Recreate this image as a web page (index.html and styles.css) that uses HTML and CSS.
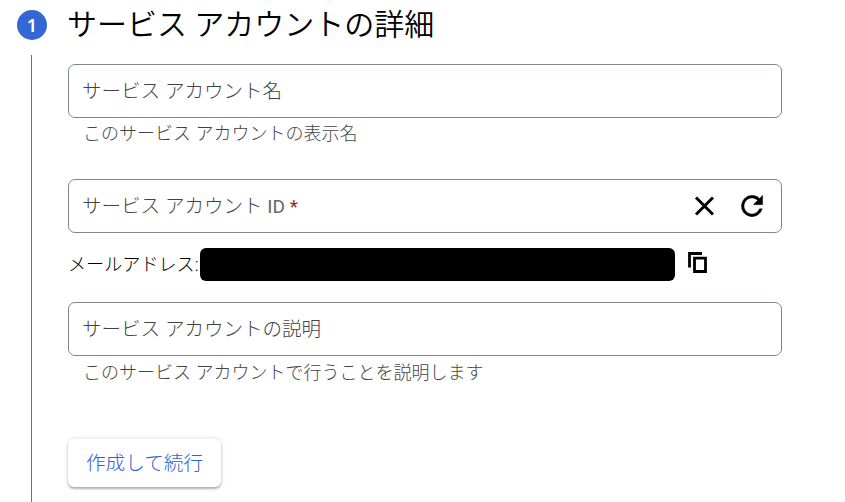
FILE: index.html
```html
<!DOCTYPE html>
<html lang="ja">
<head>
    <meta charset="UTF-8">
    <title>サービス アカウントの作成</title>
    <link rel="stylesheet" href="styles.css">
</head>
<body>
    <div class="step">
        <div class="rail">
            <div class="badge">1</div>
            <div class="line"></div>
        </div>
        <div class="content">
            <h2 class="title">サービス アカウントの詳細</h2>

            <div class="field"><span>サービス アカウント名</span></div>
            <p class="hint">このサービス アカウントの表示名</p>

            <div class="field">
                <span>サービス アカウント <span class="latin">ID <span class="required">*</span></span></span>
                <svg class="icon-clear" width="24" height="24" viewBox="0 0 24 24"><path d="M4 3.5l17 17M21 3.5l-17 17" fill="none" stroke="#000" stroke-width="3"/></svg>
                <svg class="icon-refresh" width="32" height="32" viewBox="0 0 24 24"><path d="M17.65 6.35A7.96 7.96 0 0 0 12 4a8 8 0 1 0 7.73 10h-2.08A6 6 0 1 1 12 6c1.66 0 3.14.69 4.22 1.78L13 11h7V4z" stroke="#000" stroke-width=".25"/></svg>
            </div>

            <div class="email">
                <span>メールアドレス:</span>
                <span class="redacted"></span>
                <svg class="icon-copy" width="20" height="22" viewBox="0 0 20 22"><path d="M1.5 15.5V1.5H14M6.5 6.2h11v13.3h-11z" fill="none" stroke="#000" stroke-width="2.8"/></svg>
            </div>

            <div class="field"><span>サービス アカウントの説明</span></div>
            <p class="hint hint-desc">このサービス アカウントで行うことを説明します</p>

            <button class="submit">作成して続行</button>
        </div>
    </div>
</body>
</html>
```

FILE: styles.css
```css
* {
    box-sizing: border-box;
}

body {
    margin: 0;
    height: 502px;
    overflow: hidden;
    background: #fff;
    color: #202124;
    font-family: Roboto, "Noto Sans CJK JP", sans-serif;
    font-weight: 300;
}

.step {
    display: flex;
    height: 502px;
}

.rail {
    display: flex;
    flex-direction: column;
    align-items: center;
    width: 64px;
    padding-top: 10px;
}

.badge {
    width: 30px;
    height: 30px;
    border-radius: 50%;
    background: #3367d6;
    color: #fff;
    font-family: "Noto Sans", sans-serif;
    font-size: 18px;
    font-weight: 600;
    line-height: 30px;
    text-align: center;
}

.line {
    flex: 1;
    width: 1px;
    margin: 15px 1px 0 0;
    background: #757575;
}

.content {
    width: 714px;
    margin-left: 4px;
}

.title {
    height: 48px;
    margin: 0 0 16px -1px;
    color: #000;
    font-size: 30px;
    font-weight: 350;
    line-height: 50px;
    white-space: nowrap;
}

.field {
    display: flex;
    align-items: center;
    height: 54px;
    padding: 0 13px;
    border: 1px solid #80868b;
    border-radius: 7px;
    color: #444;
    font-size: 19.55px;
}

.field > span {
    padding-bottom: 3px;
}

.latin {
    font-weight: 400;
    font-size: 19px;
    color: #666;
}

.required {
    color: #8f2c24;
}

.icon-clear {
    margin-left: auto;
}

.icon-refresh {
    margin-left: 20px;
}

.hint {
    height: 61px;
    margin: 0;
    padding-left: 15px;
    color: #444;
    font-size: 18px;
    line-height: 32px;
}

.email {
    display: flex;
    align-items: center;
    height: 69px;
    padding-bottom: 6px;
    color: #000;
    font-size: 18.1px;
}

.email > span:first-child {
    width: 131px;
    padding-bottom: 3px;
    white-space: nowrap;
}

.redacted {
    width: 475px;
    height: 33px;
    margin-left: 1px;
    border-radius: 6px;
    background: #000;
}

.icon-copy {
    margin: 0 0 4px 13px;
}

.hint-desc {
    height: 83px;
    line-height: 34px;
}

.submit {
    display: block;
    width: 153px;
    height: 48px;
    padding: 0 0 3px;
    border: 0;
    border-radius: 6px;
    background: #fff;
    box-shadow: 0 2px 2px rgba(0, 0, 0, 0.26), 0 0 5px rgba(60, 64, 67, 0.18);
    color: #2a60dc;
    font: inherit;
    font-size: 19.6px;
}
```
